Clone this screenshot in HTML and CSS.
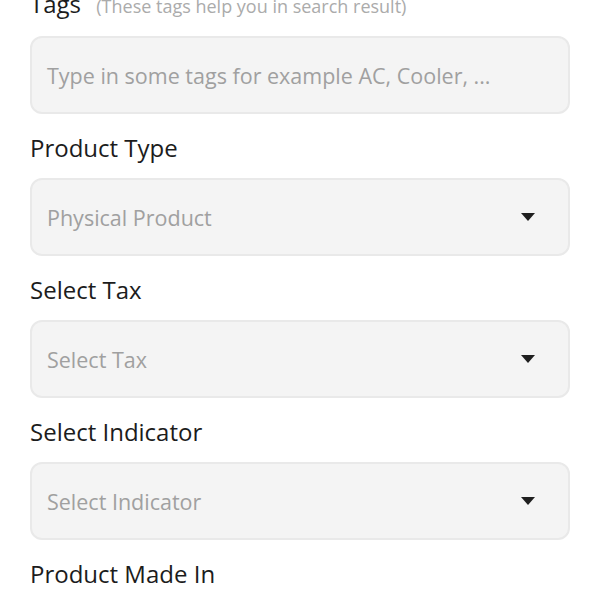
FILE: index.html
```html
<!DOCTYPE html>
<html>
<head>
<meta charset="utf-8">
<link rel="stylesheet" href="styles.css">
</head>
<body>
<form class="form">
  <div class="field">
    <div class="label">Tags <span class="hint">(These tags help you in search result)</span></div>
    <div class="box"><span class="placeholder">Type in some tags for example AC, Cooler, ...</span></div>
  </div>
  <div class="field">
    <div class="label">Product Type</div>
    <div class="box"><span class="placeholder">Physical Product</span><svg class="caret" width="14" height="8" viewBox="0 0 14 8"><path d="M0 0H14L7 8Z" fill="#1f1f1f"/></svg></div>
  </div>
  <div class="field">
    <div class="label">Select Tax</div>
    <div class="box"><span class="placeholder">Select Tax</span><svg class="caret" width="14" height="8" viewBox="0 0 14 8"><path d="M0 0H14L7 8Z" fill="#1f1f1f"/></svg></div>
  </div>
  <div class="field">
    <div class="label">Select Indicator</div>
    <div class="box"><span class="placeholder">Select Indicator</span><svg class="caret" width="14" height="8" viewBox="0 0 14 8"><path d="M0 0H14L7 8Z" fill="#1f1f1f"/></svg></div>
  </div>
  <div class="field">
    <div class="label">Product Made In</div>
  </div>
</form>
</body>
</html>
```
FILE: styles.css
```css
html, body {
  margin: 0;
  padding: 0;
  background: #ffffff;
}
body {
  font-family: "Open Sans", "Noto Sans", sans-serif;
  overflow: hidden;
}
.form {
  display: flex;
  flex-direction: column;
  gap: 19px;
  padding: 0 30px;
  margin-top: -11px;
}
.field {
  display: flex;
  flex-direction: column;
  gap: 15px;
}
.label {
  font-size: 24px;
  line-height: 30px;
  color: #1c1c1c;
  white-space: nowrap;
}
.hint {
  font-size: 18px;
  color: #ababab;
  margin-left: 9px;
}
.box {
  box-sizing: border-box;
  height: 78px;
  background: #f4f4f4;
  border: 2px solid #e9e9e9;
  border-radius: 12px;
  display: flex;
  align-items: center;
  justify-content: space-between;
  padding: 0 33px 0 15px;
}
.placeholder {
  font-size: 21.5px;
  color: #a0a0a0;
  white-space: nowrap;
}
.caret {
  display: block;
}
```
